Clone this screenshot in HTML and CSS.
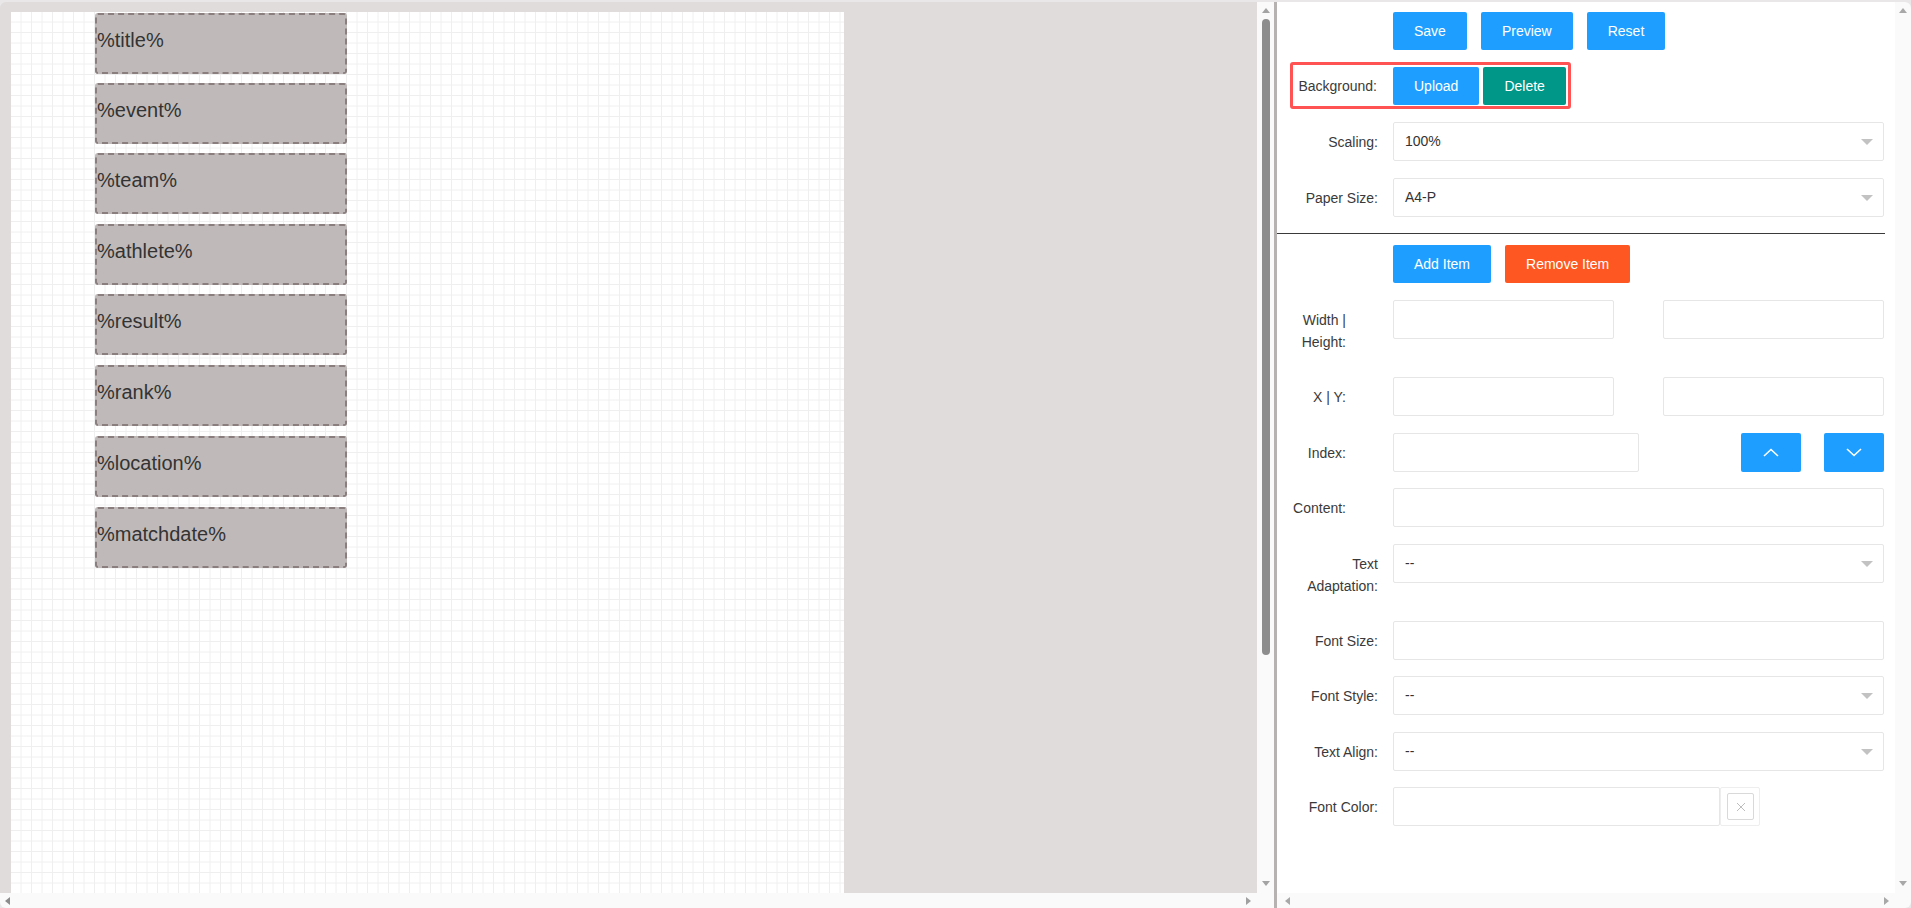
FILE: index.html
```html
<!DOCTYPE html>
<html lang="en">
<head>
<meta charset="utf-8">
<title>Certificate Designer</title>
<link rel="stylesheet" href="styles.css">
</head>
<body>
<div class="app">
  <section class="left">
    <div class="left-main">
      <div class="left-view">
        <div class="paper">
          <div class="item" style="top:1px">%title%</div>
          <div class="item" style="top:71px">%event%</div>
          <div class="item" style="top:141px">%team%</div>
          <div class="item" style="top:212px">%athlete%</div>
          <div class="item" style="top:282px">%result%</div>
          <div class="item" style="top:353px">%rank%</div>
          <div class="item" style="top:424px">%location%</div>
          <div class="item" style="top:495px">%matchdate%</div>
        </div>
      </div>
      <div class="vscroll vscroll-left">
        <span class="arr-up"></span>
        <span class="thumb"></span>
        <span class="arr-down"></span>
      </div>
    </div>
    <div class="hscroll">
      <div class="htrack htrack-left"><span class="arr-left dark"></span><span class="arr-right dark"></span></div>
      <div class="corner"></div>
    </div>
  </section>
  <div class="divider"></div>
  <section class="right">
    <div class="right-main">
      <div class="panel">
        <div class="form">
          <div class="btn-row">
            <button class="btn blue">Save</button>
            <button class="btn blue">Preview</button>
            <button class="btn blue">Reset</button>
          </div>
          <div class="bg-box">
            <span class="bg-label">Background:</span>
            <button class="btn blue">Upload</button>
            <button class="btn teal">Delete</button>
          </div>
          <div class="row first">
            <label class="lbl">Scaling:</label>
            <div class="field"><div class="select">100%<i class="caret"></i></div></div>
          </div>
          <div class="row">
            <label class="lbl">Paper Size:</label>
            <div class="field"><div class="select">A4-P<i class="caret"></i></div></div>
          </div>
          <div class="sep"></div>
          <div class="btn-row add-row">
            <button class="btn blue">Add Item</button>
            <button class="btn orange">Remove Item</button>
          </div>
          <div class="row wh-row">
            <label class="lbl narrow">Width | Height:</label>
            <div class="field split"><div class="input half"></div><div class="input half"></div></div>
          </div>
          <div class="row">
            <label class="lbl narrow">X | Y:</label>
            <div class="field split"><div class="input half"></div><div class="input half"></div></div>
          </div>
          <div class="row">
            <label class="lbl narrow">Index:</label>
            <div class="field idx">
              <div class="input idx-input"></div>
              <button class="ibtn up"><svg width="16" height="9" viewBox="0 0 16 9"><polyline points="1,8 8,1.5 15,8" fill="none" stroke="#fff" stroke-width="1.6"/></svg></button>
              <button class="ibtn"><svg width="16" height="9" viewBox="0 0 16 9"><polyline points="1,1 8,7.5 15,1" fill="none" stroke="#fff" stroke-width="1.6"/></svg></button>
            </div>
          </div>
          <div class="row">
            <label class="lbl narrow">Content:</label>
            <div class="field"><div class="input"></div></div>
          </div>
          <div class="row">
            <label class="lbl">Text Adaptation:</label>
            <div class="field"><div class="select">--<i class="caret"></i></div></div>
          </div>
          <div class="row">
            <label class="lbl">Font Size:</label>
            <div class="field"><div class="input"></div></div>
          </div>
          <div class="row">
            <label class="lbl">Font Style:</label>
            <div class="field"><div class="select">--<i class="caret"></i></div></div>
          </div>
          <div class="row">
            <label class="lbl">Text Align:</label>
            <div class="field"><div class="select">--<i class="caret"></i></div></div>
          </div>
          <div class="row">
            <label class="lbl">Font Color:</label>
            <div class="field color">
              <div class="input color-input"></div>
              <div class="picker"><span class="picker-box"><svg width="10" height="10" viewBox="0 0 10 10"><path d="M1 1 L9 9 M9 1 L1 9" stroke="#bdbdbd" stroke-width="1" fill="none"/></svg></span></div>
            </div>
          </div>
        </div>
      </div>
      <div class="vscroll vscroll-right">
        <span class="arr-up light"></span>
        <span class="arr-down light"></span>
      </div>
    </div>
    <div class="hscroll">
      <div class="htrack htrack-right"><span class="arr-left"></span><span class="arr-right"></span></div>
      <div class="corner corner-right"></div>
    </div>
  </section>
</div>
</body>
</html>
```
FILE: styles.css
```css
html, body {
  margin: 0;
  padding: 0;
}
body {
  background: #e9e7e7;
  font-family: "Liberation Sans", Arial, sans-serif;
  font-size: 14px;
  color: #333;
  overflow: hidden;
}
.app {
  display: flex;
  width: 1911px;
  height: 906px;
  margin-top: 2px;
  border-radius: 6px;
  overflow: hidden;
}

/* ---------- left canvas panel ---------- */
.left {
  width: 1274px;
  display: flex;
  flex-direction: column;
}
.left-main {
  flex: 1;
  display: flex;
  min-height: 0;
}
.left-view {
  flex: 1;
  background: #e0dcdc;
  overflow: hidden;
  padding: 10px 0 0 11px;
}
.paper {
  position: relative;
  width: 833px;
  height: 1178px;
  background-color: #fff;
  background-image:
    linear-gradient(to right, transparent 9.25px, #efefef 9.25px, #efefef 10.5px),
    linear-gradient(to bottom, transparent 9.25px, #efefef 9.25px, #efefef 10.5px);
  background-size: 10.5px 10.5px;
}
.item {
  position: absolute;
  left: 84px;
  width: 252px;
  height: 61px;
  box-sizing: border-box;
  border: 2px dashed #8a7e7e;
  border-radius: 3px;
  background: #bfbab9;
  color: #333;
  font-size: 20px;
  line-height: 23px;
  padding-top: 14px;
}

/* ---------- scrollbars ---------- */
.vscroll {
  display: flex;
  flex-direction: column;
  align-items: center;
  background: #fafafa;
}
.vscroll-left { width: 17px; }
.vscroll-right { width: 16px; }
.arr-up {
  width: 0;
  height: 0;
  border-left: 4px solid transparent;
  border-right: 4px solid transparent;
  border-bottom: 5px solid #a3a3a3;
  margin-top: 6px;
}
.arr-down {
  width: 0;
  height: 0;
  border-left: 4px solid transparent;
  border-right: 4px solid transparent;
  border-top: 5px solid #a3a3a3;
  margin-top: auto;
  margin-bottom: 7px;
}
.arr-up.light { border-bottom-color: #a8a8a8; }
.arr-down.light { border-top-color: #a8a8a8; }
.thumb {
  width: 8px;
  height: 636px;
  margin-top: 6px;
  border-radius: 4px;
  background: #8d8d8d;
}
.hscroll {
  height: 15px;
  display: flex;
  background: #fafafa;
}
.htrack {
  flex: 1;
  display: flex;
  align-items: center;
  justify-content: space-between;
}
.htrack-left { padding: 0 6px 0 5px; }
.htrack-right { padding: 0 6px 0 8px; }
.corner { width: 17px; }
.corner-right { width: 16px; }
.arr-left {
  width: 0;
  height: 0;
  border-top: 4px solid transparent;
  border-bottom: 4px solid transparent;
  border-right: 5px solid #a8a8a8;
}
.arr-right {
  width: 0;
  height: 0;
  border-top: 4px solid transparent;
  border-bottom: 4px solid transparent;
  border-left: 5px solid #a8a8a8;
}
.arr-left.dark { border-right-color: #8c8c8c; }
.arr-right.dark { border-left-color: #a0a0a0; }

.divider {
  width: 3px;
  background: #b6b2b2;
}

/* ---------- right form panel ---------- */
.right {
  flex: 1;
  display: flex;
  flex-direction: column;
}
.right-main {
  flex: 1;
  display: flex;
  min-height: 0;
}
.panel {
  flex: 1;
  background: #fff;
  overflow: hidden;
  padding: 10px 11px 0 6px;
}
.form {
  width: 601px;
}
.btn {
  height: 38px;
  line-height: 38px;
  padding: 0 21px;
  border: none;
  border-radius: 2px;
  color: #fff;
  font-family: "Liberation Sans", Arial, sans-serif;
  font-size: 14px;
  white-space: nowrap;
  margin: 0;
}
.blue { background: #1e9fff; }
.teal { background: #009688; }
.orange { background: #ff5722; }
.btn-row {
  display: flex;
  gap: 14px;
  margin-left: 110px;
}
.bg-box {
  display: flex;
  align-items: center;
  width: fit-content;
  height: 41px;
  margin: 12px 0 0 7px;
  padding-right: 2px;
  border: 3px solid #ff5252;
  border-radius: 3px;
}
.bg-box .teal { margin-left: 4px; }
.bg-label {
  width: 100px;
  box-sizing: border-box;
  padding-right: 16px;
  text-align: right;
  white-space: nowrap;
  color: #3a3a3a;
}
.row {
  display: flex;
  align-items: flex-start;
  min-height: 40.5px;
  margin-top: 15px;
}
.row.first { margin-top: 13px; }
.row.wh-row { margin-top: 17px; }
.lbl {
  width: 110px;
  flex: none;
  box-sizing: border-box;
  padding: 9px 15px;
  line-height: 22px;
  text-align: right;
  color: #3a3a3a;
}
.lbl.narrow {
  padding: 9px 47px 9px 8px;
}
.field {
  flex: 1;
  min-width: 0;
}
.input, .select {
  position: relative;
  height: 39px;
  box-sizing: border-box;
  border: 1px solid #e6e6e6;
  border-radius: 2px;
  background: #fff;
  padding-left: 11px;
  line-height: 37px;
  color: #333;
}
.caret {
  position: absolute;
  right: 10px;
  top: 16px;
  width: 0;
  height: 0;
  border-left: 6px solid transparent;
  border-right: 6px solid transparent;
  border-top: 6px solid #c2c2c2;
}
.sep {
  height: 1px;
  background: #3a3a3a;
  margin: 15px 0 0 -6px;
  width: 608px;
}
.add-row { margin-top: 11px; }
.split {
  display: flex;
  justify-content: space-between;
}
.half { width: 45%; }
.idx {
  display: flex;
  align-items: flex-start;
}
.idx-input { width: 50%; }
.ibtn {
  width: 60px;
  height: 39px;
  border: none;
  border-radius: 2px;
  background: #1e9fff;
  display: flex;
  align-items: center;
  justify-content: center;
  padding: 0;
  margin: 0;
}
.ibtn.up { margin-left: auto; margin-right: 23px; }
.color {
  display: flex;
}
.color-input { width: 327px; }
.picker {
  width: 40px;
  height: 39px;
  box-sizing: border-box;
  border: 1px solid #eeeeee;
  border-radius: 2px;
  padding: 5px 6px;
}
.picker-box {
  display: flex;
  align-items: center;
  justify-content: center;
  width: 27px;
  height: 27px;
  box-sizing: border-box;
  border: 1px solid #d9d9d9;
  border-radius: 2px;
}
```
